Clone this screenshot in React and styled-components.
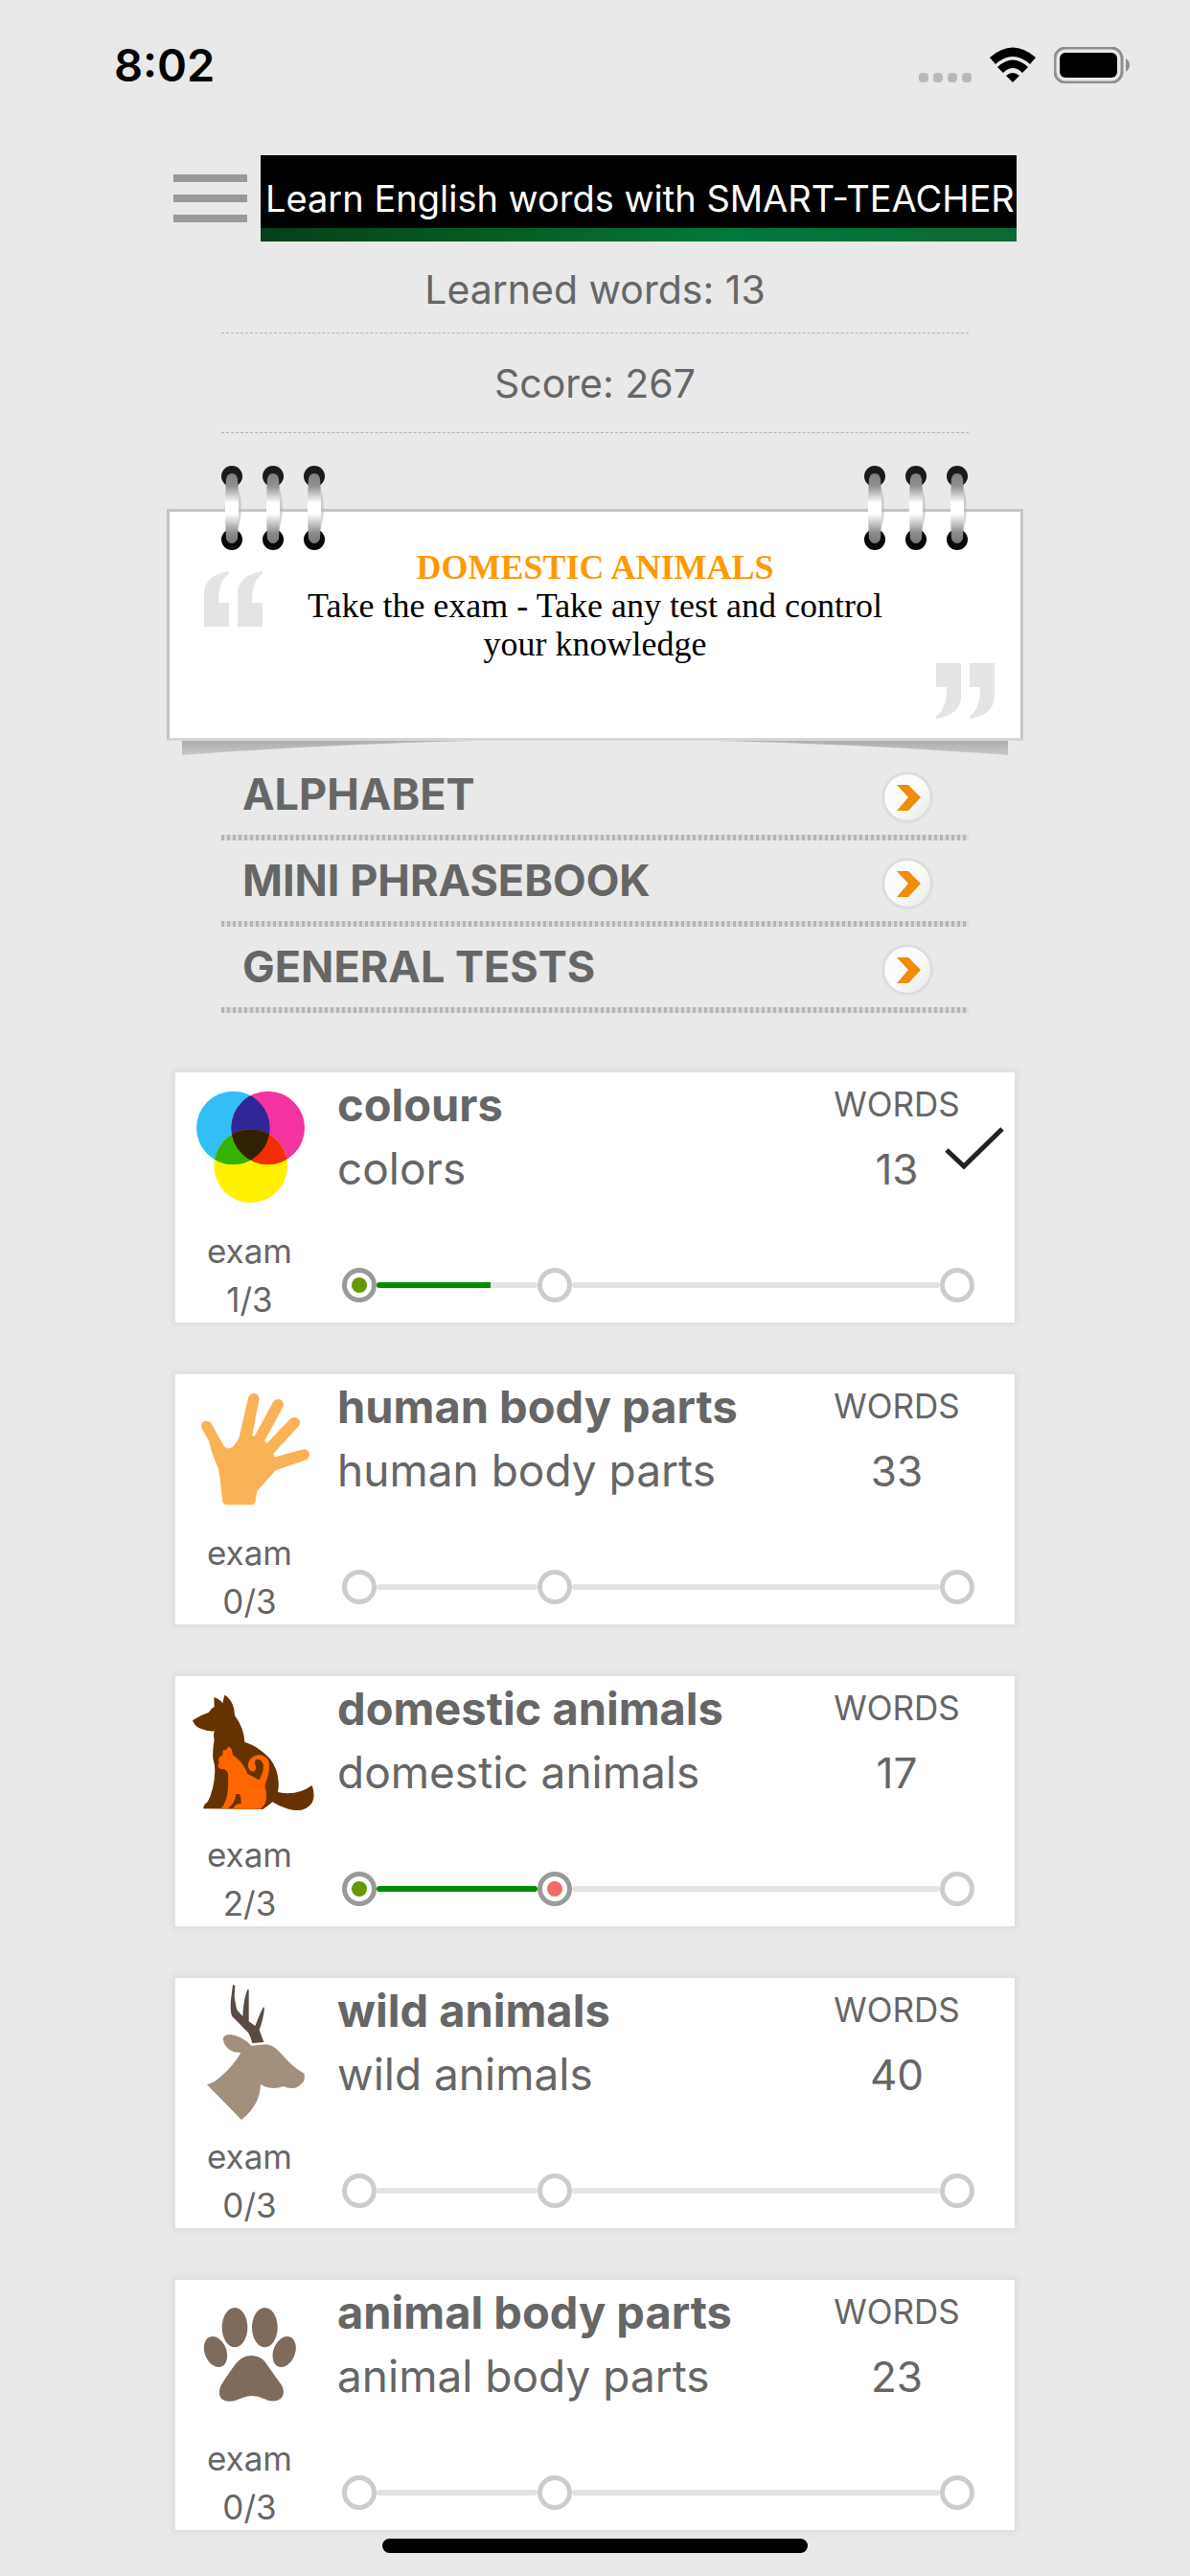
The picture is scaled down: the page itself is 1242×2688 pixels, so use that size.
import React from 'react';
import styled, { createGlobalStyle } from 'styled-components';

const GlobalStyle = createGlobalStyle`
  * {
    box-sizing: border-box;
  }
  body {
    margin: 0;
    background: #e9e9e9;
    color: #666;
    font-family: Inter, "Liberation Sans", sans-serif;
  }
  h1, h2, h3, p, ul {
    margin: 0;
    padding: 0;
    font: inherit;
    list-style: none;
  }
  a {
    color: inherit;
    text-decoration: none;
  }
  svg {
    display: block;
  }
`;

/* ---------- status bar ---------- */

const StatusBar = styled.div`
  display: flex;
  align-items: center;
  justify-content: space-between;
  padding: 38px 63px 38px 119px;
  color: #000;
`;

const Clock = styled.span`
  font-size: 47px;
  font-weight: 600;
  line-height: 60px;
`;

const Indicators = styled.div`
  display: flex;
  align-items: center;
  gap: 19px;
`;

/* ---------- page ---------- */

const Page = styled.main`
  padding: 26px 181px 48px;
`;

const Header = styled.header`
  display: flex;
  align-items: center;
  gap: 14px;
`;

const MenuButton = styled.button`
  display: flex;
  flex: none;
  flex-direction: column;
  gap: 13px;
  width: 77px;
  padding: 0;
  border: 0;
  background: none;
`;

const Bar = styled.span`
  height: 8px;
  background: #999;
`;

const Banner = styled.h1`
  flex: 1;
  min-width: 0;
  height: 90px;
  padding-left: 5px;
  overflow: hidden;
  background:
    linear-gradient(90deg, #06401a, #065c22 30%, #007a3c 62%, #0c6a35) bottom / 100% 14px no-repeat,
    #000;
  color: #fff;
  font-size: 38px;
  line-height: 90px;
  white-space: nowrap;
`;

const Stats = styled.div`
  padding: 0 50px;
`;

const Stat = styled.p`
  padding-top: 5px;
  border-bottom: 1px dashed #b2b2b2;
  font-size: 41px;
  line-height: 90px;
  text-align: center;
  & + & {
    padding: 7px 0 6px;
  }
`;

/* ---------- notepad ---------- */

const Note = styled.section`
  position: relative;
  min-height: 242px;
  margin: 79px -7px 0;
  padding: 38px 130px;
  border: 3px solid #c4c4c4;
  border-bottom-color: #d6d6d6;
  background: #fff;
  color: #000;
  font-family: "Liberation Serif", serif;
  font-size: 36px;
  line-height: 40px;
  text-align: center;
`;

const NoteTitle = styled.h2`
  color: #f90;
  font-weight: 700;
`;

const Rings = styled.div`
  position: absolute;
  top: -49px;
  ${(props) => props.$side}: 51px;
  display: flex;
  gap: 14px;
`;

const OpenQuote = styled.svg`
  position: absolute;
  top: 62px;
  left: 36px;
`;

const CloseQuote = styled.svg`
  position: absolute;
  right: 27px;
  bottom: 20px;
`;

const NoteShadow = styled.svg`
  position: absolute;
  top: 100%;
  left: 13px;
  width: calc(100% - 26px);
  height: 18px;
`;

/* ---------- links ---------- */

const Links = styled.nav`
  padding: 14px 50px 0;
`;

const LinkRow = styled.a`
  display: flex;
  align-items: center;
  justify-content: space-between;
  height: 90px;
  padding: 0 35px 6px 22px;
  background: repeating-linear-gradient(90deg, #b4b4b4 0 3px, #dcdcdc 3px 6px) bottom / 100% 6px no-repeat;
  font-size: 45px;
  font-weight: 700;
  line-height: 84px;
`;

/* ---------- topics ---------- */

const Topics = styled.ul`
  display: grid;
  gap: 50px;
  margin-top: 60px;
`;

const Card = styled.a`
  position: relative;
  display: grid;
  grid-template-columns: 155px minmax(0, 1fr);
  border: 2px solid #e1e1e1;
  background: #fff;
  box-shadow: 0 0 6px 1px #dedede;
`;

const Exam = styled.div`
  display: grid;
  row-gap: 3px;
  font-size: 35px;
  line-height: 48px;
  text-align: center;
`;

const Picture = styled.svg`
  width: 155px;
  height: 159px;
`;

const Info = styled.div`
  display: grid;
  grid-template-columns: minmax(0, 1fr) 246px;
`;

const Names = styled.div`
  padding-left: 14px;
  font-size: 46px;
  line-height: 67px;
  white-space: nowrap;
`;

const Name = styled.h3`
  font-size: 47px;
  font-weight: 700;
`;

const Count = styled.div`
  font-size: 44px;
  line-height: 70px;
  text-align: center;
`;

const CountLabel = styled.p`
  font-size: 35px;
  line-height: 66px;
`;

const Done = styled.svg`
  position: absolute;
  top: 56px;
  right: 11px;
`;

const Track = styled.div`
  display: flex;
  align-items: center;
  margin-top: 68px;
  padding: 0 42px 0 19px;
`;

const Stop = styled.span`
  flex: none;
  width: 36px;
  height: 36px;
  padding: 5px;
  border: 5px solid ${(props) => (props.$dot ? '#999' : '#ccc')};
  border-radius: 50%;
  background: ${(props) => props.$dot || '#fff'} content-box;
`;

const Segment = styled.span`
  flex: ${(props) => props.$grow} 1 0;
  height: 6px;
  overflow: hidden;
  border-radius: 3px;
  background: #e3e3e3;
`;

const Fill = styled.span`
  display: block;
  height: 100%;
  background: #008c00;
`;

const HomeIndicator = styled.div`
  position: fixed;
  bottom: 24px;
  left: 50%;
  width: 444px;
  height: 15px;
  margin-left: -222px;
  border-radius: 8px;
  background: #000;
`;

/* ---------- drawings ---------- */

const Colours = () => (
  <Picture viewBox="39 57 465 477">
    <defs>
      <clipPath id="cyan"><circle cx="220" cy="231" r="115" /></clipPath>
      <clipPath id="magenta"><circle cx="329" cy="231" r="115" /></clipPath>
    </defs>
    <circle cx="220" cy="231" r="115" fill="#33bff5" />
    <circle cx="329" cy="231" r="115" fill="#f233a0" />
    <circle cx="275" cy="350" r="115" fill="#fff200" />
    <circle cx="329" cy="231" r="115" fill="#302699" clipPath="url(#cyan)" />
    <circle cx="275" cy="350" r="115" fill="#33b400" clipPath="url(#cyan)" />
    <circle cx="275" cy="350" r="115" fill="#f03000" clipPath="url(#magenta)" />
    <g clipPath="url(#cyan)">
      <circle cx="275" cy="350" r="115" fill="#302200" clipPath="url(#magenta)" />
    </g>
  </Picture>
);

const Hand = () => (
  <Picture viewBox="39 42 465 477">
    <path fill="#f9b256" d="M186 437Q180 370 173 334Q152 290 145 252L122 212Q116 195 130 189Q143 186 151 195L190 265Q204 282 220 268Q236 250 239 238L267 117Q272 101 288 102Q303 107 301 121L280 233Q283 239 288 234L345 129Q355 116 370 122Q382 131 376 145L319 250Q320 258 326 258L398 182Q412 172 425 182Q434 193 425 205L346 290Q346 300 355 300L434 278Q452 273 459 289Q461 303 449 310L353 343L295 408L290 438Q287 450 276 451L200 451Q188 449 186 437Z" />
  </Picture>
);

const DogAndCat = () => (
  <Picture viewBox="39 42 465 477">
    <path fill="#630" d="M93 181Q120 163 143 156Q150 143 161 138L160 109Q177 113 187 127L193 101Q208 108 218 130Q224 145 225 165Q254 205 256 248Q300 262 335 300Q370 345 360 405Q420 418 467 384Q478 415 468 437Q450 465 412 462Q380 458 343 436Q330 448 313 459L127 457Q125 447 140 436Q160 400 163 340Q163 320 157 300Q155 270 161 240Q157 230 161 214Q140 216 120 207Q105 203 97 189Z" />
    <path fill="#f60" d="M182 457Q192 446 197 430Q207 400 204 347Q200 335 190 333Q176 335 172 324L176 312Q170 297 186 290L189 273L197 274L206 262L215 270L219 289Q252 312 265 348L301 367Q318 340 314 318Q308 300 292 303Q284 310 290 321Q295 335 284 340Q270 342 266 324Q266 300 290 290Q315 285 330 304Q338 330 325 368Q316 385 323 402Q328 435 312 452L306 458L220 458Q222 443 245 441Q246 426 240 411L229 411Q226 435 213 448Q210 456 200 457Z" />
  </Picture>
);

const Deer = () => (
  <Picture viewBox="39 42 465 477">
    <path fill="#5a4a40" d="M219 63L226 66L224 100Q228 130 232 142L250 162Q252 110 265 78L269 79L269 178L289 192Q305 150 315 133L318 136Q314 175 302 204L316 243L280 246Q276 228 268 214L217 162Q210 150 213 110Z" />
    <path fill="#a3907c" d="M188 232Q192 218 212 219Q245 222 277 254L320 250Q345 250 370 278Q410 325 443 341L443 360Q440 371 432 374Q420 387 408 387Q390 388 378 381Q340 395 306 375Q304 440 246 486L138 376Q160 370 180 352Q220 318 244 276Q195 275 188 232Z" />
  </Picture>
);

const Paw = () => (
  <Picture viewBox="39 27 465 477" fill="#7f6b5c">
    <ellipse cx="225" cy="176" rx="40" ry="62" />
    <ellipse cx="319" cy="176" rx="40" ry="62" />
    <ellipse cx="165" cy="252" rx="34" ry="50" transform="rotate(-21 165 252)" />
    <ellipse cx="380" cy="252" rx="34" ry="50" transform="rotate(21 380 252)" />
    <path d="M277 264Q305 264 321 285Q345 320 372 357Q384 378 372 396Q350 415 318 400Q277 380 240 400Q205 415 184 400Q170 385 182 357Q215 305 232 285Q250 264 277 264Z" />
  </Picture>
);

const Ring = () => (
  <svg width="29" height="90" viewBox="0 0 29 90">
    <defs>
      <linearGradient id="tube" x1="0" y1="0" x2="0" y2="1">
        <stop offset="0" stopColor="#808080" />
        <stop offset="0.18" stopColor="#909090" />
        <stop offset="0.42" stopColor="#fff" />
        <stop offset="0.58" stopColor="#fff" />
        <stop offset="0.85" stopColor="#8c8c8c" />
        <stop offset="1" stopColor="#777" />
      </linearGradient>
    </defs>
    <path d="M18 20Q27 45 18 70" fill="none" stroke="#bbb" strokeWidth="3" opacity="0.6" />
    <circle cx="14" cy="12" r="11" fill="#1b1b1b" />
    <circle cx="14" cy="78" r="11" fill="#080808" />
    <path d="M8 15Q9 9 14 9Q19 9 20 15Q22 45 20 77Q18 82 14 82Q10 82 8 77Q6 45 8 15Z" fill="url(#tube)" />
  </svg>
);

const Arrow = () => (
  <svg width="58" height="62" viewBox="0 -3 58 62">
    <defs>
      <radialGradient id="halo">
        <stop offset="0.8" stopColor="#cfcfcf" />
        <stop offset="1" stopColor="#e9e9e9" />
      </radialGradient>
      <linearGradient id="disc" x1="0" y1="0" x2="1" y2="1">
        <stop offset="0.5" stopColor="#fbfbfb" />
        <stop offset="1" stopColor="#e6e8e8" />
      </linearGradient>
    </defs>
    <circle cx="29" cy="31" r="28" fill="url(#halo)" />
    <circle cx="29" cy="31" r="24" fill="url(#disc)" />
    <path d="M18 18H30L43 31L30 45H18L30 31Z" fill="#f08c08" />
  </svg>
);

const quote = 'M0 58V24Q0 4 26 0V3Q15 9 15 33H26V58ZM35 58V24Q35 4 61 0V3Q50 9 50 33H61V58Z';

const topics = [
  { name: 'colours', hint: 'colors', words: 13, exam: 1, Icon: Colours, fill: 71, dots: ['#690'], done: true },
  { name: 'human body parts', hint: 'human body parts', words: 33, exam: 0, Icon: Hand, fill: 0, dots: [] },
  { name: 'domestic animals', hint: 'domestic animals', words: 17, exam: 2, Icon: DogAndCat, fill: 100, dots: ['#690', '#f36a6a'] },
  { name: 'wild animals', hint: 'wild animals', words: 40, exam: 0, Icon: Deer, fill: 0, dots: [] },
  { name: 'animal body parts', hint: 'animal body parts', words: 23, exam: 0, Icon: Paw, fill: 0, dots: [] },
];

const Topic = ({ name, hint, words, exam, Icon, fill, dots, done }) => (
  <Card href="#">
    <Exam>
      <Icon />
      <p>exam</p>
      <p>{exam}/3</p>
    </Exam>
    <div>
      <Info>
        <Names>
          <Name>{name}</Name>
          <p>{hint}</p>
        </Names>
        <Count>
          <CountLabel>WORDS</CountLabel>
          <p>{words}</p>
        </Count>
      </Info>
      <Track>
        <Stop $dot={dots[0]} />
        <Segment $grow={7}><Fill style={{ width: `${fill}%` }} /></Segment>
        <Stop $dot={dots[1]} />
        <Segment $grow={16} />
        <Stop $dot={dots[2]} />
      </Track>
    </div>
    {done && (
      <Done width="62" height="46" viewBox="0 0 62 46">
        <path d="M2 25L20 42L60 3" fill="none" stroke="#222" strokeWidth="5" />
      </Done>
    )}
  </Card>
);

const App = () => (
  <>
    <GlobalStyle />
    <StatusBar>
      <Clock>8:02</Clock>
      <Indicators>
        <svg width="55" height="38" viewBox="0 0 55 38" fill="#b9b9b9">
          <rect x="0" y="27" width="10" height="10" rx="4" />
          <rect x="15" y="27" width="10" height="10" rx="4" />
          <rect x="30" y="27" width="10" height="10" rx="4" />
          <rect x="45" y="27" width="10" height="10" rx="4" />
        </svg>
        <svg width="48" height="38" viewBox="0 0 48 38">
          <path d="M0 11Q24 -10 48 11L42 18Q24 2 6 18Z" />
          <path d="M8 21Q24 6 40 21L34 27Q24 17 14 27Z" />
          <path d="M17 30Q24 24 31 30L24 37Z" />
        </svg>
        <svg width="79" height="38" viewBox="0 0 79 38">
          <rect x="1" y="1" width="70" height="36" rx="11" fill="none" stroke="#8f8f8f" strokeWidth="3" />
          <rect x="6" y="6" width="60" height="26" rx="6" />
          <path d="M75 12Q79 15 79 19Q79 23 75 26Z" fill="#8f8f8f" />
        </svg>
      </Indicators>
    </StatusBar>
    <Page>
      <Header>
        <MenuButton aria-label="Menu">
          <Bar />
          <Bar />
          <Bar />
        </MenuButton>
        <Banner>Learn English words with SMART-TEACHER</Banner>
      </Header>
      <Stats>
        <Stat>Learned words: 13</Stat>
        <Stat>Score: 267</Stat>
      </Stats>
      <Note>
        <Rings $side="left"><Ring /><Ring /><Ring /></Rings>
        <Rings $side="right"><Ring /><Ring /><Ring /></Rings>
        <OpenQuote width="61" height="58" fill="#e4e4e4"><path d={quote} /></OpenQuote>
        <CloseQuote width="61" height="58" fill="#e4e4e4">
          <path d={quote} transform="rotate(180 30.5 29)" />
        </CloseQuote>
        <NoteTitle>DOMESTIC ANIMALS</NoteTitle>
        <p>Take the exam - Take any test and control your knowledge</p>
        <NoteShadow viewBox="0 0 862 18" preserveAspectRatio="none">
          <defs>
            <linearGradient id="fade" x1="0" y1="0" x2="0" y2="1">
              <stop offset="0.2" stopColor="#b2b2b2" />
              <stop offset="1" stopColor="#c8c8c8" />
            </linearGradient>
          </defs>
          <path d="M0 3H862V18Q720 7 560 3H302Q142 7 0 18Z" fill="url(#fade)" />
        </NoteShadow>
      </Note>
      <Links>
        <LinkRow href="#">ALPHABET <Arrow /></LinkRow>
        <LinkRow href="#">MINI PHRASEBOOK <Arrow /></LinkRow>
        <LinkRow href="#">GENERAL TESTS <Arrow /></LinkRow>
      </Links>
      <Topics>
        {topics.map((topic) => (
          <li key={topic.name}><Topic {...topic} /></li>
        ))}
      </Topics>
    </Page>
    <HomeIndicator />
  </>
);

export default App;
